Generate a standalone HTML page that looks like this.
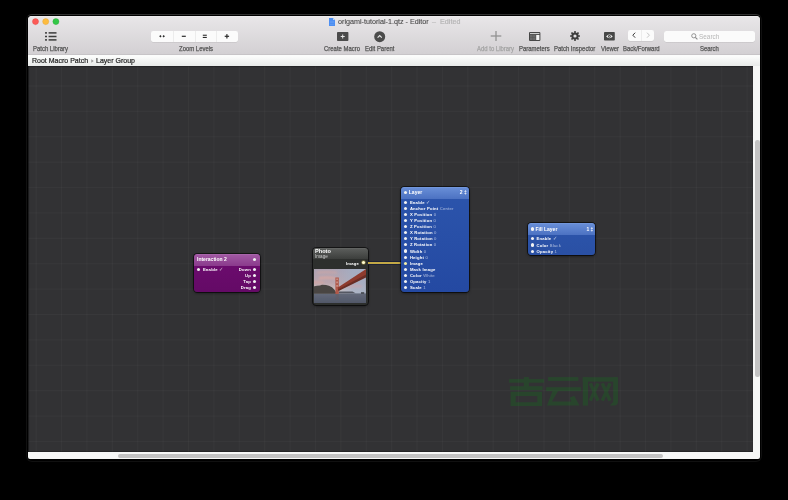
<!DOCTYPE html>
<html><head><meta charset="utf-8">
<style>
*{margin:0;padding:0;box-sizing:border-box}
html,body{width:788px;height:500px;overflow:hidden;background:#000;font-family:"Liberation Sans",sans-serif}
.a{position:absolute}
#win{position:absolute;left:28px;top:16px;width:732px;height:443.4px;border-radius:4px 4px 2px 2px;overflow:hidden;background:#f6f7f6}
#tb{position:absolute;left:0;top:0;width:732px;height:38px;background:linear-gradient(#f1eff1,#e8e6e8 1.2px,#d3d0d3)}
#crumb{position:absolute;left:0;top:38px;width:732px;height:12px;background:linear-gradient(#fbfcfb 15%,#e8eae9);border-top:1px solid #c7c4c7}
#canvas{position:absolute;left:0;top:50px;width:724.8px;height:385.6px;background-color:#323234;
 background-image:linear-gradient(90deg,rgba(255,255,255,0.028) 1.4px,transparent 1.4px),linear-gradient(rgba(255,255,255,0.028) 1.4px,transparent 1.4px);
 background-size:25.4px 25.4px;background-position:7.7px 19.5px;overflow:hidden;box-shadow:inset 1.2px 0 1px -0.2px rgba(0,0,0,.45),inset 0 1px 1px -0.2px rgba(0,0,0,.3),inset 0 -1px 1px -0.2px rgba(0,0,0,.3)}
.lbl{position:absolute;font-size:6.4px;color:#555;white-space:nowrap;line-height:6px;top:30.3px;transform:scaleX(0.93) translateZ(0);transform-origin:0 0;-webkit-text-stroke-width:0.25px}
.tx{white-space:nowrap;transform-origin:0 0}
.tl{position:absolute;width:5.9px;height:5.9px;border-radius:50%;top:2.7px}
.seg{position:absolute;background:#fbfbfb;border-radius:2px;box-shadow:0 0.5px 0.5px rgba(0,0,0,.12)}
.div{position:absolute;top:0;bottom:0;width:0.8px;background:#ececec}
.node{position:absolute;transform:translateZ(0);border-radius:3.5px;box-shadow:0 0 0 1px rgba(0,0,0,.55),0 1px 3px rgba(0,0,0,.6);overflow:hidden;font-weight:bold;color:#fff;white-space:nowrap}
.hd{position:absolute;left:0;top:0;right:0}
.ht{position:absolute;font-size:5px;line-height:5px}
.r{position:absolute;font-size:4.2px;line-height:5px;letter-spacing:0.19px;margin-top:0.1px}
.v{font-weight:normal;opacity:.6}
.ck{font-weight:normal;opacity:.7;font-size:5px}
.dot{position:absolute;width:3.2px;height:3.2px;border-radius:50%;background:#f2f2f2}
</style></head><body>
<div class="a" style="left:26px;top:14px;width:736px;height:448px;border:1px solid #101010;border-top-color:#303030;border-radius:6px"></div>
<div id="win">
 <div id="tb">
  <svg class="a" style="left:0;top:0" width="40" height="12" viewBox="0 0 40 12">
   <circle cx="7.5" cy="5.6" r="3.05" fill="#fc5b57" stroke="#e3433f" stroke-width="0.35"/>
   <circle cx="17.7" cy="5.6" r="3.05" fill="#fdbc40" stroke="#dfa032" stroke-width="0.35"/>
   <circle cx="27.9" cy="5.6" r="3.05" fill="#33c748" stroke="#27a834" stroke-width="0.35"/>
  </svg>
  <!-- title -->
  <svg class="a" style="left:300.8px;top:2px" width="6" height="8" viewBox="0 0 6 8"><path d="M0 0h4l2 2v6h-6z" fill="#4d8ff2"/><path d="M4 0v2h2z" fill="#b8d4fa"/><path d="M1 3h4v0.6h-4zM1 4.5h4v0.6h-4zM1 6h4v0.6h-4z" fill="#7fb0f6" opacity=".6"/></svg>
  <div class="a tx" style="left:309.5px;top:2.4px;font-size:7.7px;line-height:8px;color:#474747;transform:scaleX(0.935) translateZ(0);-webkit-text-stroke-width:0.1px">origami-tutorial-1.qtz - Editor</div>
  <div class="a tx" style="left:404.3px;top:2.4px;font-size:7.7px;line-height:8px;color:#b4b4b4;transform:scaleX(0.935) translateZ(0);-webkit-text-stroke-width:0.2px">–</div>
  <div class="a tx" style="left:412.3px;top:2.4px;font-size:7.7px;line-height:8px;color:#b4b4b4;transform:scaleX(0.935) translateZ(0);-webkit-text-stroke-width:0.2px">Edited</div>
  <!-- patch library -->
  <svg class="a" style="left:16px;top:15px" width="14" height="10" viewBox="0 0 14 10">
   <g fill="#3c3c3c">
   <rect x="1" y="1.15" width="2" height="1.5"/><rect x="4.6" y="1.15" width="7.9" height="1.5"/>
   <rect x="1" y="4.75" width="2" height="1.5"/><rect x="4.6" y="4.75" width="7.9" height="1.5"/>
   <rect x="1" y="8.15" width="2" height="1.5"/><rect x="4.6" y="8.15" width="7.9" height="1.5"/></g>
  </svg>
  <div class="lbl" style="left:4.9px">Patch Library</div>
  <!-- zoom -->
  <div class="seg" style="left:123.2px;top:15px;width:87.2px;height:10.6px">
   <div class="div" style="left:22px"></div><div class="div" style="left:43.4px"></div><div class="div" style="left:64.9px"></div>
   <svg class="a" style="left:0;top:0" width="88" height="11" viewBox="0 0 88 11">
    <path d="M8.2 5.3l1.2-1.2 1.2 1.2-1.2 1.2z M11.5 5.3l1.2-1.2 1.2 1.2-1.2 1.2z" fill="#2c2c2c"/>
    <rect x="30.8" y="4.7" width="4" height="1.2" fill="#2c2c2c"/>
    <rect x="51.8" y="3.7" width="4" height="1.1" fill="#2c2c2c"/><rect x="51.8" y="5.9" width="4" height="1.1" fill="#2c2c2c"/>
    <rect x="73.7" y="4.7" width="4.4" height="1.2" fill="#2c2c2c"/><rect x="75.3" y="3.1" width="1.2" height="4.4" fill="#2c2c2c"/>
   </svg>
  </div>
  <div class="lbl" style="left:151px">Zoom Levels</div>
  <!-- create macro -->
  <svg class="a" style="left:308.6px;top:16px" width="12" height="10" viewBox="0 0 12 10"><rect x="0" y="0" width="11.4" height="9" rx="0.8" fill="#4b4b4b"/><path d="M5.2 2.6h1v4h-1z M3.7 4.1h4v1h-4z" fill="#e8e8e8"/></svg>
  <div class="lbl" style="left:296.2px">Create Macro</div>
  <!-- edit parent -->
  <svg class="a" style="left:345.8px;top:14.7px" width="12" height="12" viewBox="0 0 12 12"><circle cx="5.7" cy="5.7" r="5.5" fill="#4b4b4b"/><path d="M3.6 6.7l2.1-2.1 2.1 2.1" stroke="#e8e8e8" stroke-width="1.1" fill="none"/></svg>
  <div class="lbl" style="left:336.8px">Edit Parent</div>
  <!-- add to library -->
  <svg class="a" style="left:461.5px;top:14.4px" width="12" height="12" viewBox="0 0 12 12"><rect x="5.35" y="1" width="1.3" height="10" fill="#929292"/><rect x="0.7" y="5.35" width="10.6" height="1.3" fill="#929292"/></svg>
  <div class="lbl" style="left:448.5px;color:#a4a4a4">Add to Library</div>
  <!-- parameters -->
  <svg class="a" style="left:500.9px;top:15.9px" width="12" height="10" viewBox="0 0 12 10"><rect x="0" y="0" width="11.4" height="8.9" rx="1" fill="#474747"/><rect x="1" y="1.1" width="9.4" height="1" fill="#dcdcdc"/><rect x="1" y="3" width="5.6" height="5" fill="#6a6a6a"/><rect x="3.6" y="3" width="0.5" height="5" fill="#555"/><rect x="1" y="5.3" width="5.6" height="0.5" fill="#555"/><rect x="7.2" y="3" width="3.2" height="5" fill="#f2f2f2"/></svg>
  <div class="lbl" style="left:491px">Parameters</div>
  <!-- patch inspector gear -->
  <svg class="a" style="left:541.2px;top:14.35px" width="12" height="12" viewBox="-6 -6 12 12">
   <g fill="#3e3e3e"><circle r="3.6"/>
   <rect x="-0.8" y="-5" width="1.6" height="10" rx="0.5"/><rect x="-0.8" y="-5" width="1.6" height="10" rx="0.5" transform="rotate(45)"/>
   <rect x="-0.8" y="-5" width="1.6" height="10" rx="0.5" transform="rotate(90)"/><rect x="-0.8" y="-5" width="1.6" height="10" rx="0.5" transform="rotate(135)"/></g>
   <circle r="1.6" fill="#e2e0e2"/>
  </svg>
  <div class="lbl" style="left:526.3px">Patch Inspector</div>
  <!-- viewer -->
  <svg class="a" style="left:576.2px;top:16.1px" width="11" height="9" viewBox="0 0 11 9"><rect x="0" y="0" width="10.8" height="8.6" rx="0.8" fill="#474747"/><path d="M2.1 4.4q3.3-3.6 6.6 0q-3.3 3.6-6.6 0z" fill="#f0f0f0"/><circle cx="5.4" cy="4.4" r="1.4" fill="#474747"/><circle cx="5.4" cy="4.4" r="0.5" fill="#ddd"/></svg>
  <div class="lbl" style="left:573px">Viewer</div>
  <!-- back/forward -->
  <div class="seg" style="left:599.9px;top:14.4px;width:26.4px;height:10.9px">
   <div class="div" style="left:13px"></div>
   <svg class="a" style="left:0;top:0" width="27" height="11" viewBox="0 0 27 11"><path d="M7.2 2.7l-2.4 2.5 2.4 2.5" stroke="#3c3c3c" stroke-width="1" fill="none"/><path d="M19 2.7l2.4 2.5-2.4 2.5" stroke="#c6c6c6" stroke-width="1" fill="none"/></svg>
  </div>
  <div class="lbl" style="left:594.8px">Back/Forward</div>
  <!-- search -->
  <div class="seg" style="left:635.8px;top:15.1px;width:91.4px;height:10.5px;border-radius:2.5px">
   <svg class="a" style="left:27.3px;top:2.2px" width="7" height="7" viewBox="0 0 7 7"><circle cx="2.8" cy="2.8" r="2.1" stroke="#888" stroke-width="0.9" fill="none"/><path d="M4.3 4.3l2.1 2.1" stroke="#888" stroke-width="1.1"/></svg>
   <div class="a tx" style="left:35.3px;top:1.8px;font-size:7px;line-height:7px;color:#b6b6b6;transform:scaleX(0.915) translateZ(0)">Search</div>
  </div>
  <div class="lbl" style="left:672.4px">Search</div>
 </div>
 <div id="crumb"><div class="a tx" style="left:4px;top:2.1px;font-size:7.5px;line-height:8px;color:#222;transform:scaleX(0.935) translateZ(0);-webkit-text-stroke-width:0.2px">Root Macro Patch</div><svg class="a" style="left:63px;top:4.4px" width="3" height="4" viewBox="0 0 3 4"><path d="M0.3 0.3L2.7 2 0.3 3.7z" fill="#9c9c9c"/></svg><div class="a tx" style="left:68.4px;top:2.1px;font-size:7.5px;line-height:8px;color:#222;transform:scaleX(0.935) translateZ(0);-webkit-text-stroke-width:0.2px">Layer Group</div></div>
 <div id="canvas"></div>
 <!-- scrollbars -->
 <div class="a" style="left:727.2px;top:124px;width:4.4px;height:237.2px;border-radius:2.2px;background:#c3c3c3"></div>
 <div class="a" style="left:90.2px;top:438px;width:544.8px;height:3.7px;border-radius:1.9px;background:#c3c3c3"></div>
</div>

<!-- Interaction 2 -->
<div class="node" style="left:194px;top:254px;width:66px;height:38px;background:linear-gradient(#6e0c70,#640a66)">
 <div class="hd" style="height:11.8px;background:linear-gradient(#b070b2,#a058a2 1px,#8a3a8c)"></div>
 <div class="ht" style="left:3px;top:2.9px">Interaction 2</div>
 <div class="dot" style="left:59.2px;top:3.7px"></div>
 <div class="dot" style="left:2.8px;top:13.8px"></div>
 <div class="r" style="left:8.9px;top:13px">Enable <span class="ck">&#10003;</span></div>
 <div class="r" style="right:9px;top:13px">Down</div>
 <div class="r" style="right:9px;top:19.3px">Up</div>
 <div class="r" style="right:9px;top:24.9px">Tap</div>
 <div class="r" style="right:9px;top:31.2px">Drag</div>
 <div class="dot" style="left:59.2px;top:13.8px"></div>
 <div class="dot" style="left:59.2px;top:19.6px"></div>
 <div class="dot" style="left:59.2px;top:25.7px"></div>
 <div class="dot" style="left:59.2px;top:32.1px"></div>
</div>

<!-- Photo -->
<div class="node" style="left:312.6px;top:247.5px;width:55.4px;height:57.5px;background:#2d2f2d">
 <div class="hd" style="height:11.7px;background:linear-gradient(#6a6c6a,#5a5c5a 1px,#3c3e3c)"></div>
 <div class="ht" style="left:2.4px;top:1.6px;font-size:5.6px">Photo</div>
 <div class="a" style="left:2.4px;top:6.5px;font-size:4.6px;line-height:5px;font-weight:normal;color:#cfcfcf">Image</div>
 <div class="r" style="right:9px;top:13.2px">Image</div>
 <svg class="a" style="left:47.4px;top:11.8px" width="7" height="7" viewBox="0 0 7 7"><circle cx="3.5" cy="3.5" r="2.3" fill="#e8d050" opacity=".4"/><circle cx="3.5" cy="3.5" r="1.55" fill="#fffbd0"/></svg>
 <svg class="a" style="left:1.7px;top:21.5px" width="51.8" height="34.2" viewBox="0 0 51.8 34.2" preserveAspectRatio="none">
  <defs>
   <linearGradient id="sky" x1="0" y1="0" x2="0" y2="1"><stop offset="0" stop-color="#aca2b2"/><stop offset="0.4" stop-color="#bca6ae"/><stop offset="0.62" stop-color="#cbbdbd"/><stop offset="0.75" stop-color="#c8c2c4"/></linearGradient>
   <linearGradient id="skyr" x1="0" y1="0" x2="1" y2="0"><stop offset="0.35" stop-color="#a2b0c6" stop-opacity="0"/><stop offset="0.75" stop-color="#a2b0c6" stop-opacity="0.75"/><stop offset="1" stop-color="#a2b0c6" stop-opacity="0.8"/></linearGradient>
   <linearGradient id="sea" x1="0" y1="0" x2="0" y2="1"><stop offset="0" stop-color="#646a7a"/><stop offset="1" stop-color="#4c5364"/></linearGradient>
   <filter id="bl" x="-20%" y="-20%" width="140%" height="140%"><feGaussianBlur stdDeviation="0.8"/></filter>
   <filter id="bl2" x="-20%" y="-20%" width="140%" height="140%"><feGaussianBlur stdDeviation="0.6"/></filter>
  </defs>
  <rect width="51.8" height="34.2" fill="url(#sky)"/>
  <rect width="51.8" height="26" fill="url(#skyr)"/>
  <g filter="url(#bl)">
  <path d="M3 2.5q10-1.2 20 0.3v1.8q-10-1-20 0z" fill="#d8a8a2" opacity=".6"/>
  <path d="M5 8q10-1.2 17 0.5v1.8q-8-1-17 0z" fill="#e2a89e" opacity=".75"/>
  <path d="M-2 12.5q8-0.8 12 0.3v1.8q-6-0.8-12 0z" fill="#dea49a" opacity=".65"/>
  <path d="M34 16.5q8-1.2 14 0v1.8q-7-0.8-14 0.3z" fill="#d8a0a4" opacity=".65"/>
  </g>
  <g filter="url(#bl2)">
  <rect x="-3" y="24.4" width="58" height="12" fill="url(#sea)"/>
  <path d="M-3 17.8l6-1 3-0.2 2-0.8 4 0.2 3 0.8 3 1.5 2.5 2.5 2.5 4h-26z" fill="#4a4442"/>
  <path d="M24.5 22.4h14l3 1.8h-17z" fill="#555862"/>
  <path d="M47 23.3h3.2v1.4h-3.2z" fill="#35363c"/>
  <path d="M21.8 25h3v6h-3z" fill="#6a5a60" opacity=".4"/>
  <path d="M21.4 8.5h3.4v16.5h-3.4z" fill="#b0584a"/>
  <path d="M22.2 9.5h1.8v1.4h-1.8z M22.2 12.5h1.8v1.8h-1.8z M22.2 16h1.8v1.8h-1.8z" fill="#d8b0a8" opacity=".6"/>
  <path d="M55 -2L23.5 18.8l1.2 2.6L55 5z" fill="#8e3a2e"/>
  <path d="M55 4L24 20.6l0.6 1.4L55 7z" fill="#6a2e26"/>
  </g>
 </svg>
</div>

<!-- wire -->
<div class="a" style="left:368.4px;top:261.8px;width:32.6px;height:2px;background:#c2a846;box-shadow:0 -0.8px 0 #1a1e36,0 0.8px 0 #1a1e36"></div>

<!-- Layer -->
<div class="node" style="left:401px;top:187px;width:67.8px;height:104.8px;background:linear-gradient(#2c55ac,#2449a2)">
 <div class="hd" style="height:11.6px;background:linear-gradient(#7c9fe0,#678dd6 1px,#4c72c2)"></div>
 <div class="dot" style="left:3px;top:3.9px"></div>
 <div class="ht" style="left:7.8px;top:3.4px">Layer</div>
 <div class="ht" style="left:58.8px;top:3.4px">2 ‡</div>
 <div class="dot" style="left:3px;top:13.6px"></div><div class="r" style="left:8.9px;top:12.7px">Enable <span class="ck">&#10003;</span></div>
 <div class="dot" style="left:3px;top:19.7px"></div><div class="r" style="left:8.9px;top:18.8px">Anchor Point <span class="v">Center</span></div>
 <div class="dot" style="left:3px;top:25.8px"></div><div class="r" style="left:8.9px;top:24.9px">X Position <span class="v">0</span></div>
 <div class="dot" style="left:3px;top:31.9px"></div><div class="r" style="left:8.9px;top:31px">Y Position <span class="v">0</span></div>
 <div class="dot" style="left:3px;top:38px"></div><div class="r" style="left:8.9px;top:37.1px">Z Position <span class="v">0</span></div>
 <div class="dot" style="left:3px;top:44.1px"></div><div class="r" style="left:8.9px;top:43.2px">X Rotation <span class="v">0</span></div>
 <div class="dot" style="left:3px;top:50.2px"></div><div class="r" style="left:8.9px;top:49.3px">Y Rotation <span class="v">0</span></div>
 <div class="dot" style="left:3px;top:56.3px"></div><div class="r" style="left:8.9px;top:55.4px">Z Rotation <span class="v">0</span></div>
 <div class="dot" style="left:3px;top:62.4px"></div><div class="r" style="left:8.9px;top:61.5px">Width <span class="v">0</span></div>
 <div class="dot" style="left:3px;top:68.5px"></div><div class="r" style="left:8.9px;top:67.6px">Height <span class="v">0</span></div>
 <div class="dot" style="left:3px;top:74.6px;background:#f7f1a8"></div><div class="r" style="left:8.9px;top:73.7px">Image</div>
 <div class="dot" style="left:3px;top:80.7px"></div><div class="r" style="left:8.9px;top:79.8px">Mask Image</div>
 <div class="dot" style="left:3px;top:86.8px"></div><div class="r" style="left:8.9px;top:85.9px">Color <span class="v">White</span></div>
 <div class="dot" style="left:3px;top:92.9px"></div><div class="r" style="left:8.9px;top:92px">Opacity <span class="v">1</span></div>
 <div class="dot" style="left:3px;top:99px"></div><div class="r" style="left:8.9px;top:98.1px">Scale <span class="v">1</span></div>
</div>

<!-- Fill Layer -->
<div class="node" style="left:527.6px;top:223px;width:67.4px;height:32px;background:linear-gradient(#2c55ac,#2a50a4)">
 <div class="hd" style="height:12px;background:linear-gradient(#7c9fe0,#678dd6 1px,#4c72c2)"></div>
 <div class="dot" style="left:3px;top:4.4px"></div>
 <div class="ht" style="left:7.8px;top:3.8px">Fill Layer</div>
 <div class="ht" style="left:58.8px;top:3.8px">1 ‡</div>
 <div class="dot" style="left:3px;top:14.1px"></div><div class="r" style="left:8.9px;top:13.2px">Enable <span class="ck">&#10003;</span></div>
 <div class="dot" style="left:3px;top:20.4px"></div><div class="r" style="left:8.9px;top:19.5px">Color <span class="v">Black</span></div>
 <div class="dot" style="left:3px;top:26.5px"></div><div class="r" style="left:8.9px;top:25.6px">Opacity <span class="v">1</span></div>
</div>

<!-- watermark -->
<svg class="a" style="left:505px;top:372px" width="120" height="40" viewBox="505 372 120 40" fill="#059110" opacity="0.2">
 <rect x="509.1" y="379.1" width="35" height="3.6"/>
 <rect x="523.8" y="377.1" width="5.1" height="9.6"/>
 <rect x="510.1" y="386.2" width="32.5" height="3.9"/>
 <path d="M510.6 391.8h31.5v14.2h-31.5z M515.7 395.9v6.4h21.6v-6.4z" fill-rule="evenodd"/>
 <rect x="548.1" y="377.1" width="30.2" height="3.8"/>
 <rect x="546.1" y="387.2" width="34.8" height="3.9"/>
 <path d="M552.5 391.1h5.6l-6.2 10.3h19.5l-1.8-3.6 4.6-2 5.4 10-0.4-0.3h-32.2z"/>
 <rect x="582.8" y="377.2" width="5.2" height="28.4"/>
 <rect x="582.8" y="377.2" width="34.8" height="4.4"/>
 <path d="M613.2 377.2h4.8v24.4q0 4-4 4h-4.2l3.4-3.6z"/>
 <path d="M590.3 383.4L598 400.6M598 383.4L590.3 400.6M602.3 383.4L610 400.6M610 383.4L602.3 400.6" stroke="#059110" stroke-width="3.4" fill="none"/>
</svg>
</body></html>
